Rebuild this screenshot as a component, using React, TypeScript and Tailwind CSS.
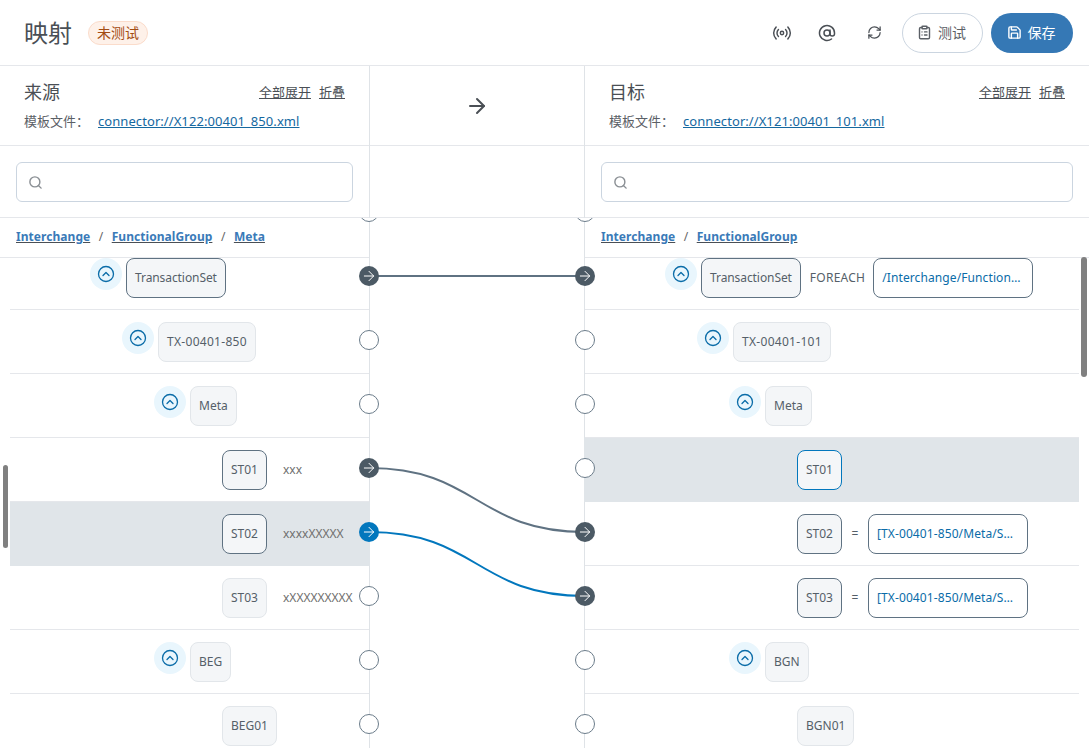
import React from 'react';
import { ArrowRight, AtSign, CircleChevronUp, ClipboardList, Radio, RefreshCw, Save, Search } from 'lucide-react';

interface TreeRow {
  label: string;
  depth: number;
  branch?: boolean;
  mapped?: boolean;
  active?: boolean;
  value?: string;
  op?: string;
  expr?: string;
}

const SOURCE_ROWS: TreeRow[] = [
  { label: 'TransactionSet', depth: 0, branch: true, mapped: true },
  { label: 'TX-00401-850', depth: 1, branch: true },
  { label: 'Meta', depth: 2, branch: true },
  { label: 'ST01', depth: 3, mapped: true, value: 'xxx' },
  { label: 'ST02', depth: 3, mapped: true, active: true, value: 'xxxxXXXXX' },
  { label: 'ST03', depth: 3, value: 'xXXXXXXXXX' },
  { label: 'BEG', depth: 2, branch: true },
  { label: 'BEG01', depth: 3 },
];

const TARGET_ROWS: TreeRow[] = [
  { label: 'TransactionSet', depth: 0, branch: true, mapped: true, op: 'FOREACH', expr: '/Interchange/FunctionalGroup/TransactionSet' },
  { label: 'TX-00401-101', depth: 1, branch: true },
  { label: 'Meta', depth: 2, branch: true },
  { label: 'ST01', depth: 3, active: true },
  { label: 'ST02', depth: 3, mapped: true, op: '=', expr: '[TX-00401-850/Meta/ST01]' },
  { label: 'ST03', depth: 3, mapped: true, op: '=', expr: '[TX-00401-850/Meta/ST02]' },
  { label: 'BGN', depth: 2, branch: true },
  { label: 'BGN01', depth: 3 },
];

// '' = empty port, otherwise the fill of the port
const LEFT_PORTS = ['', 'dark', '', '', 'dark', 'blue', '', '', ''];
const RIGHT_PORTS = ['', 'dark', '', '', '', 'dark', 'dark', '', ''];

const Port = ({ kind }: { kind: string }) => {
  if (kind === 'dark') {
    return (
      <span className="flex h-5 w-5 items-center justify-center rounded-full bg-[#4c5a65] text-white">
        <ArrowRight size={16} strokeWidth={1.5} />
      </span>
    );
  }
  if (kind === 'blue') {
    return (
      <span className="flex h-5 w-5 items-center justify-center rounded-full bg-[#0277bd] text-white">
        <ArrowRight size={16} strokeWidth={1.5} />
      </span>
    );
  }
  return <span className="h-5 w-5 rounded-full border border-[#6b7c8a] bg-white" />;
};

const Chip = ({ row }: { row: TreeRow }) => {
  let border = 'border-[#e2e6ea]';
  if (row.mapped) border = 'border-[#5f7282]';
  if (row.active) border = row.mapped ? 'border-[#5f7282]' : 'border-[#0277bd]';
  const spacing = row.label.startsWith('TX-') ? 'tracking-[0.3px]' : row.label === 'TransactionSet' ? 'tracking-[-0.08px]' : '';
  return (
    <div className={`flex h-10 shrink-0 items-center rounded-lg border bg-[#f4f6f8] px-2 text-xs text-[#555f69] ${border} ${spacing}`}>
      {row.label}
    </div>
  );
};

const Row = ({ row, side }: { row: TreeRow; side: 'left' | 'right' }) => {
  const highlight = row.active
    ? side === 'left'
      ? 'relative -mr-px bg-[#e0e5e9] border-[#e0e5e9]'
      : 'relative -ml-px pl-px bg-[#e0e5e9] border-[#e0e5e9]'
    : 'border-[#e5e7eb]';
  const indent = 80 + row.depth * 32 + (row.branch ? 0 : 36);
  return (
    <div className={`flex h-16 shrink-0 items-start border-b pt-3 ${highlight}`}>
      <div className="flex items-center" style={{ marginLeft: indent }}>
        {row.branch && (
          <span className="mr-1 -mt-2 flex h-8 w-8 shrink-0 items-center justify-center rounded-full bg-[#e9f6fd] text-[#0a6ca8]">
            <CircleChevronUp size={18} strokeWidth={1.75} />
          </span>
        )}
        <Chip row={row} />
        {row.value && <span className="ml-4 whitespace-nowrap text-xs text-[#6f6f6f]">{row.value}</span>}
        {row.op === 'FOREACH' && <span className="ml-[9px] mr-2 text-xs tracking-[0.25px] text-[#555f69]">{row.op}</span>}
        {row.op === '=' && <span className="w-[26px] text-center text-xs text-[#555f69]">{row.op}</span>}
        {row.expr && (
          <div className="flex h-10 w-40 items-center rounded-lg border border-[#5f7282] bg-white pl-2 pr-2.5">
            <span className="truncate text-xs tracking-[0.1px] text-[#0a6ca8]">{row.expr}</span>
          </div>
        )}
      </div>
    </div>
  );
};

const PanelHeader = ({ title, file }: { title: string; file: string }) => (
  <div className="h-20 shrink-0 border-b border-[#e5e7eb] pl-6 pr-6 pt-3">
    <div className="flex items-center justify-between">
      <span className="text-lg leading-7 text-[#4a4f55]">{title}</span>
      <div className="flex gap-2 text-[13px] leading-5 text-[#4a4f55]">
        <span className="underline">全部展开</span>
        <span className="underline">折叠</span>
      </div>
    </div>
    <div className="mt-[5px] flex text-[13px] leading-5 text-[#5b6066]">
      <span className="mr-[9px]">模板文件：</span>
      <span className="tracking-[0.07px] text-[#15689f] underline">{file}</span>
    </div>
  </div>
);

const SearchBox = () => (
  <div className="h-[72px] shrink-0 border-b border-[#e5e7eb] px-4 pt-4">
    <div className="flex h-10 items-center rounded-md border border-[#cbd5e0] bg-white pl-[11px]">
      <Search size={15} strokeWidth={2.25} className="text-[#8a8f94]" />
    </div>
  </div>
);

const Crumbs = ({ items }: { items: string[] }) => (
  <div className="relative z-10 flex h-10 shrink-0 items-center border-b border-[#e5e7eb] bg-white pb-0.5 pl-4 text-xs font-bold">
    {items.map((item, i) => (
      <React.Fragment key={item}>
        {i > 0 && <span className="mx-[8.5px] font-normal text-[#666]">/</span>}
        <span className="tracking-[0.05px] text-[#3a7ab8] underline decoration-[#4a4f55]">{item}</span>
      </React.Fragment>
    ))}
  </div>
);

export default function App() {
  return (
    <div className="relative flex h-screen flex-col overflow-hidden bg-white [font-family:'Noto_Sans','Noto_Sans_CJK_SC',sans-serif]">
      <header className="flex h-[66px] shrink-0 items-center border-b border-[#e5e7eb] pl-6 pr-4">
        <h1 className="text-2xl text-[#4a4f55]">映射</h1>
        <span className="ml-4 flex h-6 items-center rounded-full border border-[#fbdccb] bg-[#fef1e9] px-2 text-sm text-[#a34c12]">未测试</span>
        <div className="ml-auto flex items-center text-[#4a4f55]">
          <Radio size={20} strokeWidth={1.75} className="mr-[26px]" />
          <AtSign size={18} strokeWidth={2} className="mr-[31px]" />
          <RefreshCw size={15} strokeWidth={2} className="mr-[20px]" />
          <button className="flex h-10 w-[81px] items-center justify-center gap-1.5 rounded-full border border-[#cbd5e0] bg-white pr-[2px] text-sm text-[#5b6066]">
            <ClipboardList size={15} strokeWidth={2.25} />
            测试
          </button>
          <button className="ml-2 flex h-10 w-[82px] items-center justify-center gap-1.5 rounded-full bg-[#3578b5] pr-[2px] text-sm text-white">
            <Save size={15} strokeWidth={2.25} />
            保存
          </button>
        </div>
      </header>

      <div className="relative flex min-h-0 flex-1">
        <section className="flex w-[369px] shrink-0 flex-col">
          <PanelHeader title="来源" file="connector://X122:00401_850.xml" />
          <SearchBox />
          <Crumbs items={['Interchange', 'FunctionalGroup', 'Meta']} />
          <div className="-mt-3 flex flex-col pl-2.5">
            {SOURCE_ROWS.map((row) => (
              <Row key={row.label} row={row} side="left" />
            ))}
          </div>
        </section>

        <section className="flex w-[216px] shrink-0 flex-col border-x border-[#dfe3e7]">
          <div className="flex h-20 shrink-0 items-center justify-center border-b border-[#e5e7eb] text-[#4a4f55]">
            <ArrowRight size={24} strokeWidth={2} />
          </div>
          <div className="h-[72px] shrink-0 border-b border-[#e5e7eb]" />
        </section>

        <section className="flex min-w-0 flex-1 flex-col">
          <PanelHeader title="目标" file="connector://X121:00401_101.xml" />
          <SearchBox />
          <Crumbs items={['Interchange', 'FunctionalGroup']} />
          <div className="-mt-3 flex flex-col pr-2.5">
            {TARGET_ROWS.map((row) => (
              <Row key={row.label} row={row} side="right" />
            ))}
          </div>
        </section>

        {/* connection layer over the gutter */}
        <div className="absolute bottom-0 left-[359px] top-[152px] z-20 w-[236px] overflow-hidden">
          <svg className="absolute left-0 top-0" width="236" height="530" fill="none">
            <path d="M10 58 H226" stroke="#5f7282" strokeWidth="2" />
            <path d="M10 250 C118 250 118 314 226 314" stroke="#5f7282" strokeWidth="2" />
            <path d="M10 314 C118 314 118 378 226 378" stroke="#0277bd" strokeWidth="2" />
          </svg>
          <div className="relative -mt-[38px] flex flex-col">
            {LEFT_PORTS.map((kind, i) => (
              <div key={i} className="flex h-16 items-center justify-between">
                <Port kind={kind} />
                <Port kind={RIGHT_PORTS[i]} />
              </div>
            ))}
          </div>
        </div>
      </div>

      {/* scrollbars */}
      <div className="absolute left-[3px] top-[465px] z-30 h-[83px] w-[5px] rounded-full bg-[#808080]" />
      <div className="absolute left-[1081px] top-[257px] z-30 h-[120px] w-[6px] rounded-full bg-[#808080]" />
    </div>
  );
}
